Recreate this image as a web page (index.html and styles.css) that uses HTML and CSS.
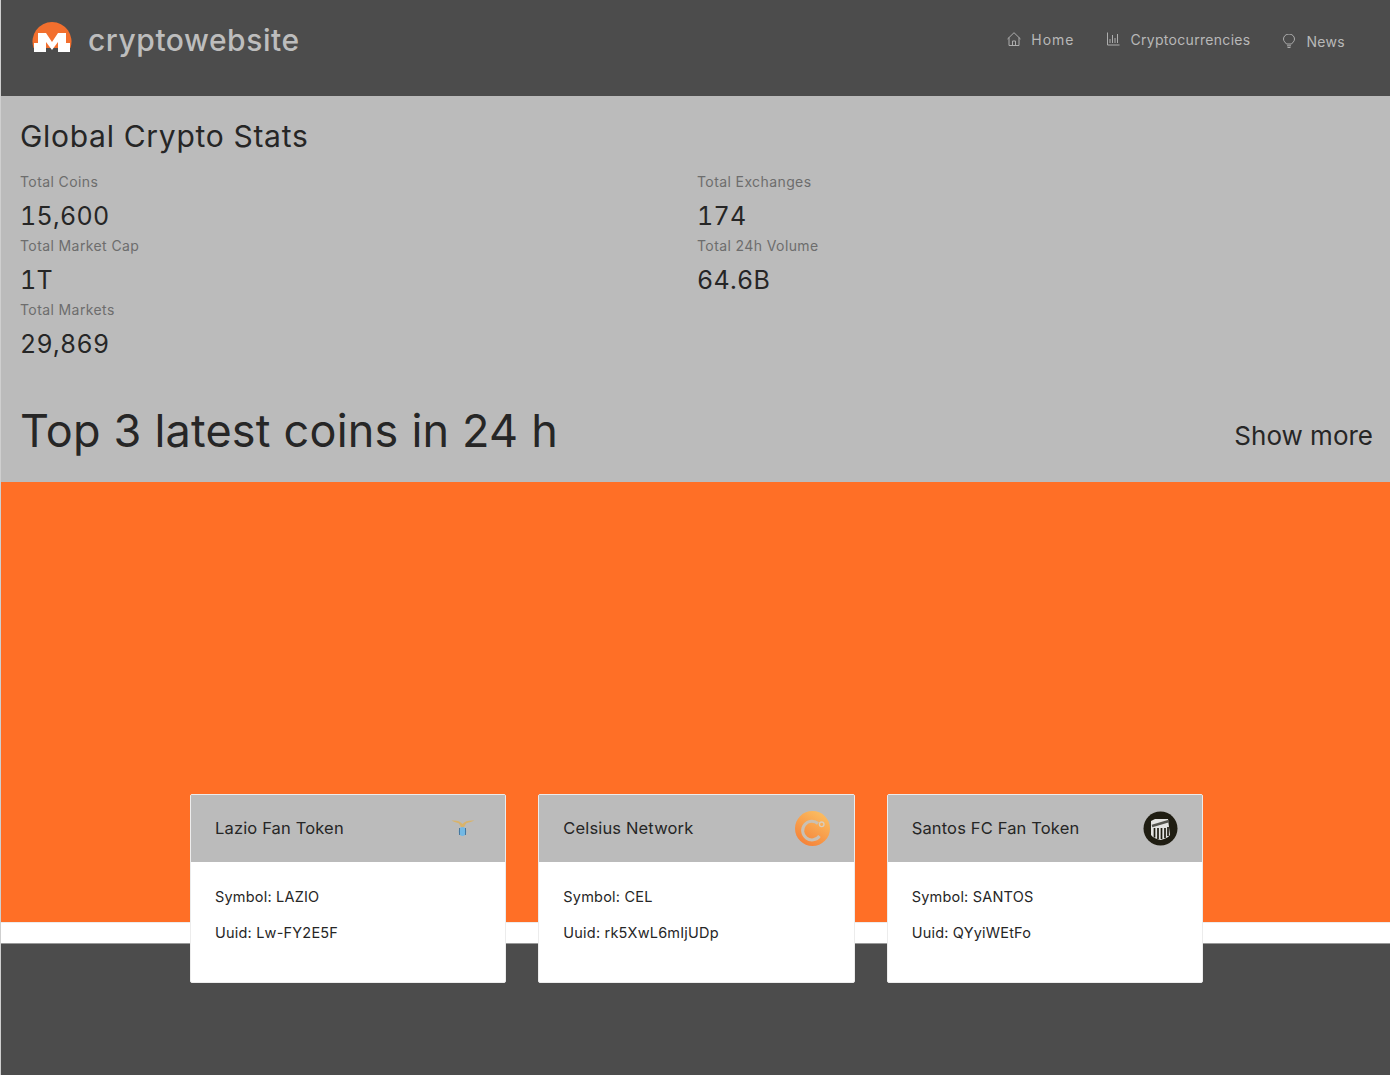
FILE: index.html
```html
<!DOCTYPE html>
<html lang="en">
<head>
<meta charset="utf-8">
<title>cryptowebsite</title>
<link rel="stylesheet" href="styles.css">
</head>
<body>
<div class="app">
  <header class="navbar">
    <a class="brand">
      <svg class="brand-logo" viewBox="0 0 40 30" aria-hidden="true">
        <path d="M1.600 26 A19.500 19.500 0 1 1 38.400 26 Z" fill="#f26f2e"/>
        <path d="M6 11 H14 L20 20 L26 11 H34 V21 H38 V30 H26 V20 L20 28 L14 20 V30 H2 V21 H6 Z" fill="#fff"/>
      </svg>
      <span class="brand-name">cryptowebsite</span>
    </a>
    <nav class="menu">
      <a class="menu-item menu-item-home">
        <svg class="icon" viewBox="0 0 14 14"><path d="M0.500 7 L7 0.700 L13.500 7 M2 5.500 V13.500 H12 V5.500 M5.500 13.500 V9 H8.500 V13.500" /></svg>
        <span>Home</span>
      </a>
      <a class="menu-item">
        <svg class="icon" viewBox="0 0 14 14"><path d="M0.500 0.500 V13 H12.500 M3 11 V7 M5.500 11 V3 M8 11 V6 M10.500 11 V2" /></svg>
        <span>Cryptocurrencies</span>
      </a>
      <a class="menu-item menu-item-low">
        <svg class="icon" viewBox="0 0 14 14"><path d="M4.500 10 C3.500 8.500 1.500 7.500 1.500 5 A5.500 5 0 0 1 12.500 5 C12.500 7.500 10.500 8.500 9.500 10 Z M5 11.800 H9 M5.500 13.500 H8.500" /></svg>
        <span>News</span>
      </a>
    </nav>
  </header>

  <main class="stats">
    <h2 class="stats-title">Global Crypto Stats</h2>
    <div class="stats-grid">
      <div class="stat"><div class="stat-label">Total Coins</div><div class="stat-value">15,600</div></div>
      <div class="stat"><div class="stat-label">Total Exchanges</div><div class="stat-value">174</div></div>
      <div class="stat"><div class="stat-label">Total Market Cap</div><div class="stat-value">1T</div></div>
      <div class="stat"><div class="stat-label">Total 24h Volume</div><div class="stat-value">64.6B</div></div>
      <div class="stat"><div class="stat-label">Total Markets</div><div class="stat-value">29,869</div></div>
    </div>
    <div class="latest">
      <h1 class="latest-title">Top 3 latest coins in 24 h</h1>
      <a class="show-more">Show more</a>
    </div>
  </main>

  <section class="hero">
    <div class="cards">
      <article class="card">
        <div class="card-head">
          <span>Lazio Fan Token</span>
          <svg class="coin" viewBox="0 0 35 35">
            <path d="M5.500 9.500 C10 9 14 10 16.500 13 C19 10 23 9 28.500 9.500 C25 11 22 11.500 20 12.500 L18 16 H15 L13 12.500 C11 11.500 8 11 5.500 9.500 Z" fill="#d9b36a"/>
            <ellipse cx="16.500" cy="20.500" rx="3.800" ry="4.500" fill="#72b8e4"/>
            <path d="M19.500 17 V24 M13.500 17 V24" stroke="#3f6f96" stroke-width="0.900" fill="none"/>
          </svg>
        </div>
        <div class="card-body">
          <p>Symbol: LAZIO</p>
          <p>Uuid: Lw-FY2E5F</p>
        </div>
      </article>
      <article class="card">
        <div class="card-head">
          <span>Celsius Network</span>
          <svg class="coin" viewBox="0 0 35 35">
            <defs><linearGradient id="cel" x1="0.800" y1="0" x2="0.200" y2="1"><stop offset="0" stop-color="#fbc063"/><stop offset="1" stop-color="#f57f36"/></linearGradient></defs>
            <circle cx="17.500" cy="17.500" r="17.500" fill="url(#cel)"/>
            <path d="M23 12.500 A9.300 9.300 0 1 0 24.500 25" fill="none" stroke="#c9c0b4" stroke-width="3"/>
            <circle cx="26.700" cy="13.300" r="2.300" fill="none" stroke="#d8cdbd" stroke-width="1.300"/>
          </svg>
        </div>
        <div class="card-body">
          <p>Symbol: CEL</p>
          <p>Uuid: rk5XwL6mIjUDp</p>
        </div>
      </article>
      <article class="card">
        <div class="card-head">
          <span>Santos FC Fan Token</span>
          <svg class="coin" viewBox="0 0 35 35">
            <circle cx="17.500" cy="17.500" r="17" fill="#1f1d12"/>
            <path d="M8 10 L12 8 L25 8 L27 24 C25 27 21 28 17.500 29 C14 28 10 27 8 24 Z" fill="#e4e4e2"/>
            <path d="M11.500 17 V26.500 M15 17 V28 M18.500 17 V28 M22 17 V27 M25 16 V25" stroke="#1f1d12" stroke-width="1.700"/>
            <path d="M9 15 L26 10" stroke="#55554f" stroke-width="2.500"/>
          </svg>
        </div>
        <div class="card-body">
          <p>Symbol: SANTOS</p>
          <p>Uuid: QYyiWEtFo</p>
        </div>
      </article>
    </div>
  </section>

  <div class="strip"></div>
  <footer class="footer"></footer>
</div>
</body>
</html>
```
FILE: styles.css
```css
* { box-sizing: border-box; }
html, body { margin: 0; padding: 0; background: #fff; }
body { font-family: Inter, "Open Sans", "Liberation Sans", sans-serif; color: #262626; }
.app { width: 1390px; height: 1075px; overflow: hidden; border-left: 1px solid #cfcfcf; }

.navbar { height: 96px; background: #4c4c4c; display: flex; justify-content: space-between; align-items: flex-start; padding: 0 45px 0 31px; }
.brand { display: flex; align-items: center; gap: 16px; height: 80px; }
.brand-logo { width: 40px; height: 30px; margin-top: -6px; }
.brand-name { font-size: 30px; color: #bdbdbd; font-weight: 500; letter-spacing: 0.55px; }
.menu { display: flex; gap: 32px; height: 78px; align-items: center; }
.menu-item { display: flex; align-items: center; gap: 10px; font-size: 14px; letter-spacing: 0.3px; color: #b8b8b8; }
.menu-item-home { letter-spacing: 1px; }
.menu-item-low { margin-top: 4px; }
.icon { width: 14px; height: 14px; fill: none; stroke: #adadad; stroke-width: 1; }

.stats { background: #bbbbbb; height: 386px; padding: 20px 17px 0 19px; }
.stats-title { margin: 0; font-size: 30px; font-weight: 400; line-height: 40px; letter-spacing: 0.7px; color: #262626; }
.stats-grid { display: grid; grid-template-columns: 677px 1fr; margin-top: 11px; }
.stat { height: 64px; padding-top: 4px; }
.stat-label { font-size: 14px; line-height: 22px; letter-spacing: 0.4px; color: #6d6d6d; }
.stat-value { font-size: 25px; line-height: 46px; color: #262626; letter-spacing: 0.3px; font-variant-numeric: tabular-nums; }
.latest { display: flex; justify-content: space-between; align-items: flex-end; margin-top: 44px; }
.latest-title { margin: 0; font-size: 45px; line-height: 56px; font-weight: 400; letter-spacing: 0.2px; color: #262626; }
.show-more { font-size: 26px; line-height: 40px; margin-bottom: 3px; color: #262626; }

.hero { height: 440px; background: #ff6f26; position: relative; }
.cards { display: flex; gap: 32px; padding: 312px 0 0 189px; }
.card { width: 316.330px; height: 189px; background: #fff; border: 1px solid #ececec; border-radius: 2px; flex: none; position: relative; z-index: 1; }
.card-head { height: 67px; background: #bbbbbb; display: flex; align-items: center; justify-content: space-between; padding: 0 24px; font-size: 16.500px; letter-spacing: 0.15px; color: #262626; }
.card-head span { margin-top: -2px; }
.coin { width: 35px; height: 35px; }
.card-body { padding: 24px 24px 0; font-size: 14.500px; line-height: 22px; letter-spacing: 0.2px; color: #262626; }
.card-body p { margin: 0 0 14px; }

.strip { height: 21px; background: #fff; border-top: 1px solid #ececec; }
.footer { height: 132px; background: #4c4c4c; border-top: 1px solid #999; }
```
